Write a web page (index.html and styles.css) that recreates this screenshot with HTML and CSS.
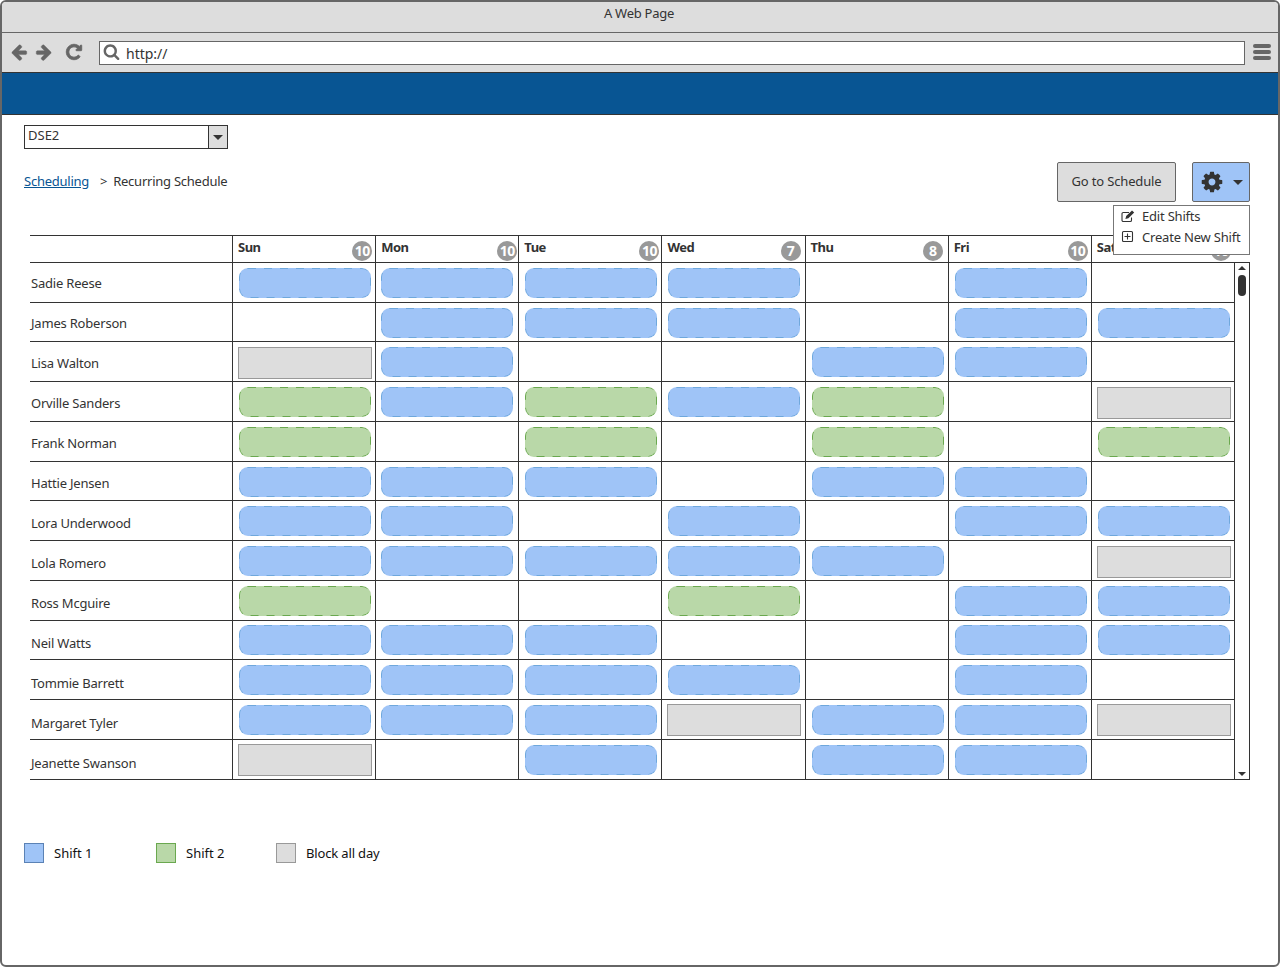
FILE: index.html
```html
<!DOCTYPE html>
<html lang="en">
<head>
<meta charset="utf-8">
<title>A Web Page</title>
<link rel="stylesheet" href="styles.css">
</head>
<body>
<div class="window">
  <div class="titlebar">A Web Page</div>
  <div class="navbar">
    <svg class="nav-icon arrow" viewBox="0 0 1792 1792"><path d="M1664 896v128q0 53-32.500 90.500t-84.500 37.500h-704l293 294q38 36 38 90t-38 90l-75 76q-37 37-90 37-52 0-91-37l-651-652q-37-37-37-90 0-52 37-91l651-650q38-38 91-38 52 0 90 38l75 74q38 38 38 91t-38 91l-293 293h704q52 0 84.500 37.500t32.500 90.500z"/></svg>
    <svg class="nav-icon arrow" viewBox="0 0 1792 1792"><path d="M1600 960q0 54-37 91l-651 651q-39 37-91 37-51 0-90-37l-75-75q-38-38-38-91t38-91l293-293h-704q-52 0-84.500-37.500t-32.500-90.500v-128q0-53 32.500-90.500t84.500-37.500h704l-293-294q-38-36-38-90t38-90l75-75q38-38 90-38 53 0 91 38l651 651q37 35 37 90z"/></svg>
    <svg class="nav-icon reload" viewBox="0 0 1792 1792"><path d="M1664 256v448q0 26-19 45t-45 19h-448q-42 0-59-40-17-39 14-69l138-138q-148-137-349-137-104 0-198.500 40.500t-163.500 109.500-109.500 163.500-40.500 198.500 40.500 198.500 109.500 163.500 163.500 109.500 198.500 40.500q119 0 225-52t179-147q7-10 23-12 15 0 25 9l137 138q9 8 9.500 20.500t-7.500 22.500q-109 132-264 204.500t-327 72.500q-156 0-298-61t-245-164-164-245-61-298 61-298 164-245 245-164 298-61q147 0 284.500 55.500t244.500 156.500l130-129q29-31 70-14 39 17 39 59z"/></svg>
    <div class="urlbar">
      <svg class="search-icon" viewBox="0 0 1792 1792"><path d="M1216 832q0-185-131.500-316.500t-316.500-131.500-316.500 131.500-131.500 316.500 131.500 316.500 316.500 131.500 316.500-131.500 131.500-316.500zm512 832q0 52-38 90t-90 38q-54 0-90-38l-343-342q-179 124-399 124-143 0-273.500-55.500t-225-150-150-225-55.500-273.500 55.500-273.500 150-225 225-150 273.500-55.500 273.500 55.500 225 150 150 225 55.500 273.500q0 220-124 399l343 343q37 37 37 90z"/></svg>
      <span>http://</span>
    </div>
    <div class="hamburger"><i></i><i></i><i></i></div>
  </div>
  <div class="banner"></div>
  <main class="content">
    <div class="select"><span class="select-value">DSE2</span><span class="select-btn"><b class="caret"></b></span></div>
    <div class="toolbar">
      <div class="crumbs"><a href="#">Scheduling</a><span class="sep">&gt;</span><span>Recurring Schedule</span></div>
      <div class="actions">
        <div class="btn">Go to Schedule</div>
        <div class="gear-btn">
          <svg class="gear" viewBox="0 0 1792 1792"><path d="M1152 896q0-106-75-181t-181-75-181 75-75 181 75 181 181 75 181-75 75-181zm512-109v222q0 12-8 23t-20 13l-185 28q-19 54-39 91 35 50 107 138 10 12 10 25t-9 23q-27 37-99 108t-94 71q-12 0-26-9l-138-108q-44 23-91 38-16 136-29 186-7 28-36 28h-222q-14 0-24.500-8.500t-11.500-21.500l-28-184q-49-16-90-37l-141 107q-10 9-25 9-14 0-25-11-126-114-165-168-7-10-7-23 0-12 8-23 15-21 51-66.500t54-70.500q-27-50-41-99l-183-27q-13-2-21-12.500t-8-23.500v-222q0-12 8-23t19-13l186-28q14-46 39-92-40-57-107-138-10-12-10-24 0-10 9-23 26-36 98.500-107.500t94.500-71.500q13 0 26 10l138 107q44-23 91-38 16-136 29-186 7-28 36-28h222q14 0 24.500 8.500t11.500 21.500l28 184q49 16 90 37l142-107q9-9 24-9 13 0 25 10 129 119 165 170 7 8 7 22 0 12-8 23-15 21-51 66.500t-54 70.500q26 50 41 98l183 28q13 2 21 12.500t8 23.500z"/></svg>
          <b class="caret"></b>
          <div class="menu">
            <div class="menu-item">
              <svg class="menu-icon" viewBox="0 0 14 14"><path class="ol" d="M10.500 8.500v2.700a1.300 1.300 0 0 1-1.300 1.300H2.300A1.300 1.300 0 0 1 1 11.200V4.800a1.300 1.300 0 0 1 1.300-1.300H8"/><path class="fl" d="M11 1.500l2.200 2-5.800 5.800-3 .8.800-3z"/></svg>
              <span>Edit Shifts</span>
            </div>
            <div class="menu-item">
              <svg class="menu-icon" viewBox="0 0 14 14"><rect class="ol" x="1.500" y="1.500" width="10" height="10" rx="1"/><path class="ol" d="M6.500 3.500v6M3.500 6.500h6"/></svg>
              <span>Create New Shift</span>
            </div>
          </div>
        </div>
      </div>
    </div>

    <section class="schedule">
      <div class="head">
        <div class="head-name"></div>
        <div class="head-day">Sun<span class="badge">10</span></div>
        <div class="head-day">Mon<span class="badge">10</span></div>
        <div class="head-day">Tue<span class="badge">10</span></div>
        <div class="head-day">Wed<span class="badge">7</span></div>
        <div class="head-day">Thu<span class="badge">8</span></div>
        <div class="head-day">Fri<span class="badge">10</span></div>
        <div class="head-day">Sat<span class="badge">10</span></div>
      </div>
      <div class="body">
        <div class="grid">
          <div class="name" style="--row:0">Sadie Reese</div><div class="cell"><div class="s1"></div></div><div class="cell"><div class="s1"></div></div><div class="cell"><div class="s1"></div></div><div class="cell"><div class="s1"></div></div><div class="cell"></div><div class="cell"><div class="s1"></div></div><div class="cell"></div>
          <div class="name" style="--row:1">James Roberson</div><div class="cell"></div><div class="cell"><div class="s1"></div></div><div class="cell"><div class="s1"></div></div><div class="cell"><div class="s1"></div></div><div class="cell"></div><div class="cell"><div class="s1"></div></div><div class="cell"><div class="s1"></div></div>
          <div class="name" style="--row:2">Lisa Walton</div><div class="cell"><div class="blk"></div></div><div class="cell"><div class="s1"></div></div><div class="cell"></div><div class="cell"></div><div class="cell"><div class="s1"></div></div><div class="cell"><div class="s1"></div></div><div class="cell"></div>
          <div class="name" style="--row:3">Orville Sanders</div><div class="cell"><div class="s2"></div></div><div class="cell"><div class="s1"></div></div><div class="cell"><div class="s2"></div></div><div class="cell"><div class="s1"></div></div><div class="cell"><div class="s2"></div></div><div class="cell"></div><div class="cell"><div class="blk"></div></div>
          <div class="name" style="--row:4">Frank Norman</div><div class="cell"><div class="s2"></div></div><div class="cell"></div><div class="cell"><div class="s2"></div></div><div class="cell"></div><div class="cell"><div class="s2"></div></div><div class="cell"></div><div class="cell"><div class="s2"></div></div>
          <div class="name" style="--row:5">Hattie Jensen</div><div class="cell"><div class="s1"></div></div><div class="cell"><div class="s1"></div></div><div class="cell"><div class="s1"></div></div><div class="cell"></div><div class="cell"><div class="s1"></div></div><div class="cell"><div class="s1"></div></div><div class="cell"></div>
          <div class="name" style="--row:6">Lora Underwood</div><div class="cell"><div class="s1"></div></div><div class="cell"><div class="s1"></div></div><div class="cell"></div><div class="cell"><div class="s1"></div></div><div class="cell"></div><div class="cell"><div class="s1"></div></div><div class="cell"><div class="s1"></div></div>
          <div class="name" style="--row:7">Lola Romero</div><div class="cell"><div class="s1"></div></div><div class="cell"><div class="s1"></div></div><div class="cell"><div class="s1"></div></div><div class="cell"><div class="s1"></div></div><div class="cell"><div class="s1"></div></div><div class="cell"></div><div class="cell"><div class="blk"></div></div>
          <div class="name" style="--row:8">Ross Mcguire</div><div class="cell"><div class="s2"></div></div><div class="cell"></div><div class="cell"></div><div class="cell"><div class="s2"></div></div><div class="cell"></div><div class="cell"><div class="s1"></div></div><div class="cell"><div class="s1"></div></div>
          <div class="name" style="--row:9">Neil Watts</div><div class="cell"><div class="s1"></div></div><div class="cell"><div class="s1"></div></div><div class="cell"><div class="s1"></div></div><div class="cell"></div><div class="cell"></div><div class="cell"><div class="s1"></div></div><div class="cell"><div class="s1"></div></div>
          <div class="name" style="--row:10">Tommie Barrett</div><div class="cell"><div class="s1"></div></div><div class="cell"><div class="s1"></div></div><div class="cell"><div class="s1"></div></div><div class="cell"><div class="s1"></div></div><div class="cell"></div><div class="cell"><div class="s1"></div></div><div class="cell"></div>
          <div class="name" style="--row:11">Margaret Tyler</div><div class="cell"><div class="s1"></div></div><div class="cell"><div class="s1"></div></div><div class="cell"><div class="s1"></div></div><div class="cell"><div class="blk"></div></div><div class="cell"><div class="s1"></div></div><div class="cell"><div class="s1"></div></div><div class="cell"><div class="blk"></div></div>
          <div class="name" style="--row:12">Jeanette Swanson</div><div class="cell"><div class="blk"></div></div><div class="cell"></div><div class="cell"><div class="s1"></div></div><div class="cell"></div><div class="cell"><div class="s1"></div></div><div class="cell"><div class="s1"></div></div><div class="cell"></div>
        </div>
        <div class="scrollbar">
          <b class="tri-up"></b>
          <i class="thumb"></i>
          <b class="tri-down"></b>
        </div>
      </div>
    </section>

    <div class="legend">
      <div class="legend-item one"><span class="swatch sw1"></span>Shift 1</div>
      <div class="legend-item two"><span class="swatch sw2"></span>Shift 2</div>
      <div class="legend-item three"><span class="swatch sw3"></span>Block all day</div>
    </div>
  </main>
</div>
</body>
</html>
```

FILE: styles.css
```css
* { box-sizing: border-box; }
html, body { margin: 0; padding: 0; background: #fff; }
body {
  font-family: "Noto Sans", "Open Sans", sans-serif;
  font-size: 13px;
  color: #333;
}
.window {
  width: 1280px;
  height: 967px;
  border: 2px solid #666;
  border-radius: 6px;
  overflow: hidden;
  display: flex;
  flex-direction: column;
}
.titlebar {
  height: 31px;
  flex: none;
  background: #ddd;
  border-bottom: 1px solid #666;
  text-align: center;
  line-height: 23px;
  padding-right: 2px;
  letter-spacing: -0.25px;
}
.navbar {
  height: 40px;
  flex: none;
  background: #ddd;
  border-bottom: 1px solid #333;
  display: flex;
  align-items: center;
  padding: 0 0 1px 8px;
}
.nav-icon { fill: #666; stroke: #666; flex: none; }
.arrow { width: 18px; height: 18px; margin-right: 7px; stroke-width: 40; }
.reload { width: 18px; height: 18px; margin-left: 5px; stroke-width: 90; }
.urlbar {
  flex: none;
  align-self: flex-start;
  width: 1146px;
  height: 24px;
  margin: 8px 0 0 16px;
  background: #fff;
  border: 1px solid #666;
  display: flex;
  align-items: center;
  font-size: 14px;
  padding-left: 3px;
}
.search-icon { width: 17px; height: 17px; fill: #666; margin-right: 6px; margin-top: -3px; }
.hamburger { margin-left: 8px; width: 18px; display: flex; flex-direction: column; gap: 2px; }
.hamburger i { display: block; height: 4px; background: #666; border-radius: 2px; }
.banner {
  height: 42px;
  flex: none;
  background: #085593;
  border-bottom: 1px solid #333;
}
.content { flex: 1; padding: 10px 28px 0 22px; }
.select {
  width: 204px;
  height: 24px;
  border: 1px solid #333;
  display: flex;
}
.select-value { flex: 1; padding-left: 3px; line-height: 18px; }
.select-btn {
  width: 19px;
  background: #ddd;
  border-left: 1px solid #333;
  display: flex;
  align-items: center;
  justify-content: center;
}
.caret {
  display: block;
  width: 0;
  height: 0;
  border-left: 5px solid transparent;
  border-right: 5px solid transparent;
  border-top: 5px solid #333;
}
.toolbar {
  margin-top: 13px;
  display: flex;
  justify-content: space-between;
  align-items: center;
  height: 40px;
}
.crumbs { display: flex; padding-bottom: 2px; letter-spacing: -0.25px; }
.crumbs a { color: #085593; }
.sep { margin: 0 6px 0 11px; }
.actions { display: flex; gap: 16px; }
.btn {
  width: 119px;
  height: 40px;
  background: #ddd;
  border: 1px solid #666;
  border-radius: 2px;
  padding-bottom: 3px;
  letter-spacing: -0.15px;
  display: flex;
  align-items: center;
  justify-content: center;
}
.gear-btn {
  position: relative;
  width: 58px;
  height: 40px;
  background: #9fc4f7;
  border: 1px solid #666;
  border-radius: 2px;
  display: flex;
  align-items: center;
  padding-left: 7px;
}
.gear { width: 24px; height: 24px; fill: #333; margin-right: 9px; }
.menu {
  position: absolute;
  top: 42px;
  right: -1px;
  width: 137px;
  height: 50px;
  background: #fff;
  border: 1px solid #777;
  z-index: 2;
  letter-spacing: -0.2px;
}
.menu-item {
  height: 21px;
  display: flex;
  align-items: center;
  padding: 0 0 1px 7px;
}
.menu-icon { width: 14px; height: 14px; margin-right: 7px; flex: none; }
.ol { fill: none; stroke: #333; stroke-width: 1.1; }
.fl { fill: #333; }
.schedule { margin: 33px 0 0 6px; width: 1220px; }
.head {
  height: 28px;
  border-top: 1px solid #333;
  border-bottom: 1px solid #333;
  display: grid;
  grid-template-columns: 202px repeat(7, 143.143px) 16px;
}
.head-day {
  border-left: 1px solid #333;
  padding: 2px 3px 0 5px;
  font-weight: 700;
  letter-spacing: -0.5px;
  display: flex;
  justify-content: space-between;
  align-items: flex-start;
}
.badge {
  width: 20px;
  height: 20px;
  margin-top: 3px;
  border-radius: 50%;
  background: #999;
  color: #fff;
  font-size: 14px;
  line-height: 20px;
  text-align: center;
}
.head-day:nth-child(3) .badge { margin-right: -2px; }
.head-day:nth-child(4) .badge { margin-right: -1px; }
.head-day:nth-child(5) .badge { margin-right: 1px; }
.head-day:nth-child(6) .badge { margin-right: 2px; }
.body { display: flex; }
.grid {
  flex: none;
  width: 1204px;
  display: grid;
  grid-template-columns: 202px repeat(7, 143.143px);
  grid-auto-rows: 39.74px;
}
.name {
  border-bottom: 1px solid #333;
  display: flex;
  align-items: center;
  padding-left: 1px;
  padding-top: calc(1.4px + var(--row) * 0.47px);
  letter-spacing: -0.2px;
}
.cell {
  border-left: 1px solid #333;
  border-bottom: 1px solid #333;
  padding: 1px 0 0 1px;
  display: flex;
  align-items: center;
  justify-content: center;
}
.cell:nth-child(8n+3) { padding-left: 0; padding-right: 1px; }
.cell:nth-child(8n+6), .cell:nth-child(8n+7), .cell:nth-child(8n+8) { padding-left: 3px; }
.s1, .s2 { width: 132px; height: 30px; border-radius: 9px; }
.s1 {
  background: #9fc4f7 url("data:image/svg+xml,%3Csvg xmlns='http://www.w3.org/2000/svg' width='132' height='30'%3E%3Crect x='.5' y='.5' width='131' height='29' rx='8.500' fill='none' stroke='%236fa8dc' stroke-dasharray='8 8'/%3E%3C/svg%3E") no-repeat;
}
.s2 {
  background: #b9d8a8 url("data:image/svg+xml,%3Csvg xmlns='http://www.w3.org/2000/svg' width='132' height='30'%3E%3Crect x='.5' y='.5' width='131' height='29' rx='8.500' fill='none' stroke='%236aa84f' stroke-dasharray='8 8'/%3E%3C/svg%3E") no-repeat;
}
.blk { width: 134px; height: 32px; margin-top: 1px; background: #ddd; border: 1px solid #999; }
.scrollbar {
  flex: none;
  width: 16px;
  border-left: 1px solid #333;
  border-right: 1px solid #333;
  border-bottom: 1px solid #333;
  display: flex;
  flex-direction: column;
  align-items: center;
  padding: 3px 0 3px;
}
.tri-up, .tri-down {
  display: block;
  width: 0;
  height: 0;
  border-left: 4px solid transparent;
  border-right: 4px solid transparent;
}
.tri-up { border-bottom: 4px solid #333; }
.tri-down { border-top: 4px solid #333; margin-top: auto; }
.thumb { display: block; width: 8px; height: 21px; margin-top: 5px; border-radius: 4px; background: #333; }
.legend { margin-top: 63px; display: flex; }
.legend-item { display: flex; align-items: center; height: 20px; color: #111; }
.legend-item.one { width: 132px; }
.legend-item.two { width: 120px; }
.legend-item.three { letter-spacing: -0.15px; }
.swatch { width: 20px; height: 20px; margin-right: 10px; border: 1px solid; }
.sw1 { background: #9fc4f7; border-color: #5b82b5; }
.sw2 { background: #b9d8a8; border-color: #6aa84f; }
.sw3 { background: #ddd; border-color: #999; }
```
